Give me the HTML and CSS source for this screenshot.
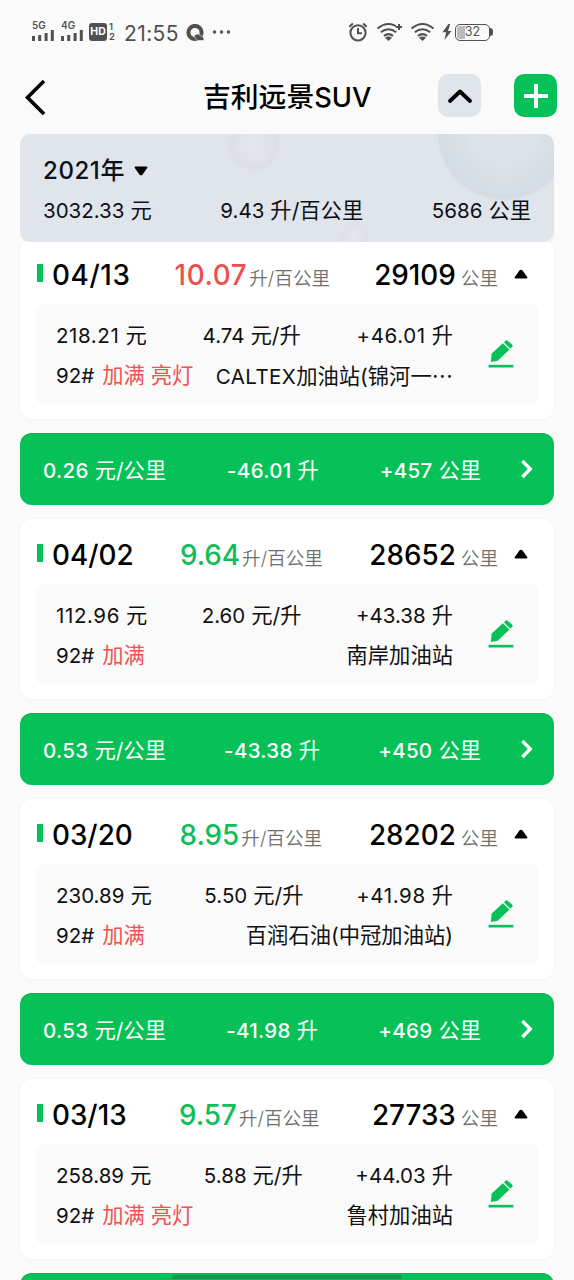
FILE: index.html
```html
<!DOCTYPE html>
<html lang="zh-CN">
<head>
<meta charset="utf-8">
<title>吉利远景SUV</title>
<link rel="stylesheet" href="styles.css">
</head>
<body>
<svg class="defs" width="0" height="0">
  <symbol id="pencil" viewBox="0 0 26 28"><path fill="#06c157" d="M3.6 13.800 14.800 3.200l6.600 6.400L9.800 20.800 2.900 22zM16 2.200l1.600-1.400q1.100-.9 2.200.1L24.200 4.800q.9 1 0 2l-1.800 2z"/><path fill="#06c157" d="M.5 24.800h24.800v2.700H.5z"/></symbol>
  <symbol id="up" viewBox="0 0 14 10"><path d="M1.4 9.5h11.2q1.4-.3.6-1.6L8.4 1.3Q7 .1 5.6 1.3L.8 7.9Q0 9.2 1.4 9.5z"/></symbol>
  <symbol id="next" viewBox="0 0 14 20"><path d="m2.4 2 7.8 8-7.8 8" fill="none" stroke="#fff" stroke-width="3.4"/></symbol>
  <symbol id="wifi" viewBox="0 0 26 20"><g fill="none" stroke="#505050" stroke-width="2"><path d="M1.5 6.5Q12.5-2.5 23.5 6.5M4.8 10.3q7.7-6.2 15.4 0M8 13.9q4.5-3.6 9 0"/></g><path fill="#505050" d="M9 15.8q3.5-2.4 7 0L12.5 19z"/></symbol>
  <symbol id="signal" viewBox="0 0 23 11"><path fill="#505050" d="M0 6h3v5H0zM6.2 5h3v6h-3zM12.6 3h3v8h-3zM18.8 0h3v11h-3z"/></symbol>
</svg>
<header class="status">
  <div class="cell"><span>5G</span><svg width="23" height="11"><use href="#signal"/></svg></div>
  <div class="cell cell-second"><span>4G</span><svg width="23" height="11"><use href="#signal"/></svg></div>
  <div class="hd">HD</div>
  <div class="sim"><span>1</span><span>2</span></div>
  <time>21:55</time>
  <svg class="browser" width="20" height="18" viewBox="0 0 20 18"><circle cx="9" cy="8.5" r="6.6" fill="none" stroke="#505050" stroke-width="4"/><path d="M8 12q3.5-3.8 6.6-.3 3.4.3 3.4 4.8H11z" fill="#505050" stroke="#fafafa" stroke-width=".6"/></svg>
  <svg class="dots" width="20" height="4" viewBox="0 0 20 4"><g fill="#505050"><circle cx="2.5" cy="2" r="1.7"/><circle cx="9.5" cy="2" r="1.7"/><circle cx="16.5" cy="2" r="1.7"/></g></svg>
  <div class="status-right">
    <svg width="20" height="20" viewBox="0 0 20 20"><g fill="none" stroke="#505050" stroke-width="2"><circle cx="10" cy="10.8" r="7.6"/><path d="M10 6v5.2h4M1.3 4.8l3.6-3.2M18.7 4.8l-3.6-3.2"/></g></svg>
    <svg class="wifi-plus" width="28" height="20" viewBox="0 0 28 20"><use href="#wifi" width="26" height="20"/><path d="M20 5h6M23 2v6" stroke="#fafafa" stroke-width="5"/><path d="M20 5h6M23 2v6" stroke="#505050" stroke-width="2"/></svg>
    <svg class="wifi" width="26" height="20"><use href="#wifi"/></svg>
    <svg class="bolt" width="10" height="16" viewBox="0 0 10 16"><path d="M6.4 0 .5 8.3h3.6L2.5 16l7-9H6L8.2 0z" fill="#505050"/></svg>
    <div class="battery"><span>32</span></div><i class="battery-tip"></i>
  </div>
</header>
<nav class="top">
  <svg class="back" width="24" height="36" viewBox="0 0 24 36"><path d="M21 2 4.500 18.500 21 35" fill="none" stroke="#000" stroke-width="3.6"/></svg>
  <h1>吉利远景<span>SUV</span></h1>
  <button class="collapse"><svg width="26" height="16" viewBox="0 0 26 16"><path d="m3 13 10-9.500L23 13" fill="none" stroke="#000" stroke-width="3.8" stroke-linecap="round" stroke-linejoin="round"/></svg></button>
  <button class="add"><svg width="26" height="26" viewBox="0 0 26 26"><path d="M13 1v24M1 13h24" stroke="#fff" stroke-width="4"/></svg></button>
</nav>
<main>
  <section class="summary">
    <h2><b class="ones">2021</b>年 <svg width="14" height="10"><use href="#up"/></svg></h2>
    <div class="row"><span><b>3032.33</b> 元</span><span><b>9.43</b> 升/百公里</span><span><b>5686</b> 公里</span></div>
  </section>

  <article class="card first">
    <div class="head"><i class="mark"></i><div class="row"><b class="ones">04/13</b><span class="red"><b class="ones">10.07</b><small>升/百公里</small></span><span><b>29109</b><small class="km">公里</small></span></div><svg class="toggle" width="14" height="10"><use href="#up"/></svg></div>
    <div class="detail"><div class="lines">
      <div class="row"><span><b class="ones">218.21</b> 元</span><span><b>4.74</b> 元/升</span><span><b class="ones">+46.01</b> 升</span></div>
      <div class="row"><span><b>92#</b> <em>加满 亮灯</em></span><span><b class="brand">CALTEX</b>加油站(锦河一<span class="more">…</span></span></div>
    </div><svg class="edit" width="26" height="28"><use href="#pencil"/></svg></div>
  </article>
  <a class="trip"><div class="row"><span><b>0.26</b> 元/公里</span><span><b class="ones">-46.01</b> 升</span><span><b>+457</b> 公里</span></div><svg width="14" height="20"><use href="#next"/></svg></a>

  <article class="card">
    <div class="head"><i class="mark"></i><div class="row"><b>04/02</b><span class="green"><b>9.64</b><small>升/百公里</small></span><span><b>28652</b><small class="km">公里</small></span></div><svg class="toggle" width="14" height="10"><use href="#up"/></svg></div>
    <div class="detail"><div class="lines">
      <div class="row"><span><b class="ones">112.96</b> 元</span><span><b>2.60</b> 元/升</span><span><b>+43.38</b> 升</span></div>
      <div class="row"><span><b>92#</b> <em>加满</em></span><span>南岸加油站</span></div>
    </div><svg class="edit" width="26" height="28"><use href="#pencil"/></svg></div>
  </article>
  <a class="trip"><div class="row"><span><b>0.53</b> 元/公里</span><span><b>-43.38</b> 升</span><span><b>+450</b> 公里</span></div><svg width="14" height="20"><use href="#next"/></svg></a>

  <article class="card">
    <div class="head"><i class="mark"></i><div class="row"><b>03/20</b><span class="green"><b>8.95</b><small>升/百公里</small></span><span><b>28202</b><small class="km">公里</small></span></div><svg class="toggle" width="14" height="10"><use href="#up"/></svg></div>
    <div class="detail"><div class="lines">
      <div class="row"><span><b>230.89</b> 元</span><span><b>5.50</b> 元/升</span><span><b class="ones">+41.98</b> 升</span></div>
      <div class="row"><span><b>92#</b> <em>加满</em></span><span>百润石油(中冠加油站)</span></div>
    </div><svg class="edit" width="26" height="28"><use href="#pencil"/></svg></div>
  </article>
  <a class="trip"><div class="row"><span><b>0.53</b> 元/公里</span><span><b class="ones">-41.98</b> 升</span><span><b>+469</b> 公里</span></div><svg width="14" height="20"><use href="#next"/></svg></a>

  <article class="card">
    <div class="head"><i class="mark"></i><div class="row"><b>03/13</b><span class="green"><b>9.57</b><small>升/百公里</small></span><span><b>27733</b><small class="km">公里</small></span></div><svg class="toggle" width="14" height="10"><use href="#up"/></svg></div>
    <div class="detail"><div class="lines">
      <div class="row"><span><b>258.89</b> 元</span><span><b>5.88</b> 元/升</span><span><b>+44.03</b> 升</span></div>
      <div class="row"><span><b>92#</b> <em>加满 亮灯</em></span><span>鲁村加油站</span></div>
    </div><svg class="edit" width="26" height="28"><use href="#pencil"/></svg></div>
  </article>
  <a class="trip"></a>
</main>
<div class="home-bar"></div>
</body>
</html>
```

FILE: styles.css
```css
* { box-sizing: border-box; }
body { margin: 0; height: 1280px; background: #fafafa; color: #111; font-family: Inter, "Noto Sans CJK SC", sans-serif; font-size: 21.3px; }
b { font-size: 20.5px; font-weight: 400; }
em, i { font-style: normal; }
svg { display: block; flex: none; }
.defs { position: absolute; }

.status { height: 64px; padding: 0 81px 0 32px; display: flex; align-items: center; color: #505050; }
.cell { width: 23px; height: 20px; margin-top: -2px; display: flex; flex-direction: column; justify-content: space-between; font-size: 10px; line-height: 9px; font-weight: 600; }
.cell svg { flex: none; }
.cell-second { margin-left: 6px; }
.hd { margin-left: 5px; width: 18px; height: 18px; border-radius: 3px; background: #505050; color: #fff; font-size: 10.5px; font-weight: 700; line-height: 18px; text-align: center; }
.sim { margin-left: 2px; width: 6px; display: flex; flex-direction: column; font-size: 9.5px; line-height: 10px; font-weight: 600; }
.status time { margin: 4px 0 0 9px; width: 56px; font-size: 21px; line-height: 24px; letter-spacing: .4px; }
.browser { margin: 2px 0 0 6px; }
.dots { margin-left: 6px; }
.status-right { margin-left: auto; display: flex; align-items: center; }
.wifi-plus { margin-left: 8px; }
.wifi { margin-left: 6px; }
.bolt { margin-left: 6px; }
.battery { margin-left: 3px; width: 35px; height: 17px; border: 1.6px solid #505050; border-radius: 5px; font-size: 12.5px; line-height: 14px; text-align: center; background: linear-gradient(90deg, #bbb 9px, transparent 9px); background-clip: content-box; padding: 1px 1px; }
.battery span { display: block; margin-top: -1px; }
.battery-tip { width: 3px; height: 8px; border-radius: 0 3px 3px 0; background: #505050; }

.top { height: 70px; padding: 0 17px 7px 20px; display: flex; align-items: center; }
.back { margin-left: 3px; margin-top: 3px; }
.top h1 { margin: 3px 0 0 156px; width: 235px; font-size: 27.8px; line-height: 36px; font-weight: 500; white-space: nowrap; color: #000; }
.top h1 span { font-size: 27.3px; font-weight: 450; }
.top button { width: 43px; height: 43px; padding: 0; border: 0; border-radius: 10px; display: flex; align-items: center; justify-content: center; flex: none; }
.collapse { background: #e0e4eb; }
.add { margin-left: 33px; background: #06c157; }

main { height: 1146px; padding: 0 20px; overflow: hidden; }
.row { display: flex; justify-content: space-between; white-space: nowrap; }
.ones { letter-spacing: .6px; }
.brand { letter-spacing: .4px; }
.summary { position: relative; z-index: 1; height: 108px; padding: 21px 23px 0; border-radius: 10px; color: #0c1018;
  background:
    radial-gradient(circle 67px at 484px 0, #e0e4ea 0, #dbe2e8 50%, #d2dce2 96%, transparent 100%),
    radial-gradient(circle 27px at 234px 11px, #e3e6ec 0, #dfe3e9 60%, #dce0e6 88%, transparent 100%),
    radial-gradient(circle 16px at 334px 103px, #e5e8ee 0, #dee2e8 80%, transparent 100%),
    #e0e4eb; }
.summary h2 { margin: 0; height: 32px; display: flex; align-items: center; font-size: 24px; font-weight: 500; line-height: 32px; }
.summary h2 b { font-size: 24px; font-weight: 500; }
.summary h2 svg { margin-left: 10px; transform: rotate(180deg); }
.summary .row { margin-top: 7px; line-height: 32px; }

.card { height: 180px; padding: 0 15px 15px 16px; border-radius: 12px; background: #fff; box-shadow: 0 0 3px rgba(0,0,0,.06); }
.first { margin-top: -3px; }
.head { height: 65px; display: flex; align-items: center; padding-top: 8px; }
.mark { width: 6px; height: 18px; margin: -5px 0 0 1px; background: #06c157; }
.head .row { width: 446px; margin: 2px 0 0 9px; align-items: baseline; line-height: 36px; }
.head b { font-size: 27.8px; font-weight: 500; color: #000; }
.head small { margin-left: 2px; font-size: 18.6px; color: #707070; font-weight: 350; }
.head .km { margin-left: 5px; }
.head .red b { color: #ef4e4e; }
.head .green b { color: #10bd58; }
.toggle { margin-left: 16px; margin-top: -4px; }
.detail { height: 100px; border-radius: 7px; background: #fafafa; padding: 11px 25px 0 20px; display: flex; justify-content: space-between; }
.lines { width: 397px; line-height: 40px; }
.lines .row { height: 40px; }
.lines em { margin-left: 2px; color: #ee5251; font-weight: 400; }
.more { font-family: "Noto Sans CJK SC"; }
.edit { margin-top: 25px; }
.trip { margin: 14px 0; height: 72px; padding: 0 20px 0 23px; border-radius: 12px; background: #06c157; color: #fff; display: flex; align-items: center; justify-content: space-between; box-shadow: inset 0 1px 1px #15b45a; }
.trip .row { width: 438px; line-height: 34px; padding-top: 2px; }
.trip b { font-weight: 500; letter-spacing: .3px; }
.home-bar { position: absolute; left: 172px; top: 1275px; width: 230px; height: 4px; border-radius: 2px; background: #13994b; }
```
